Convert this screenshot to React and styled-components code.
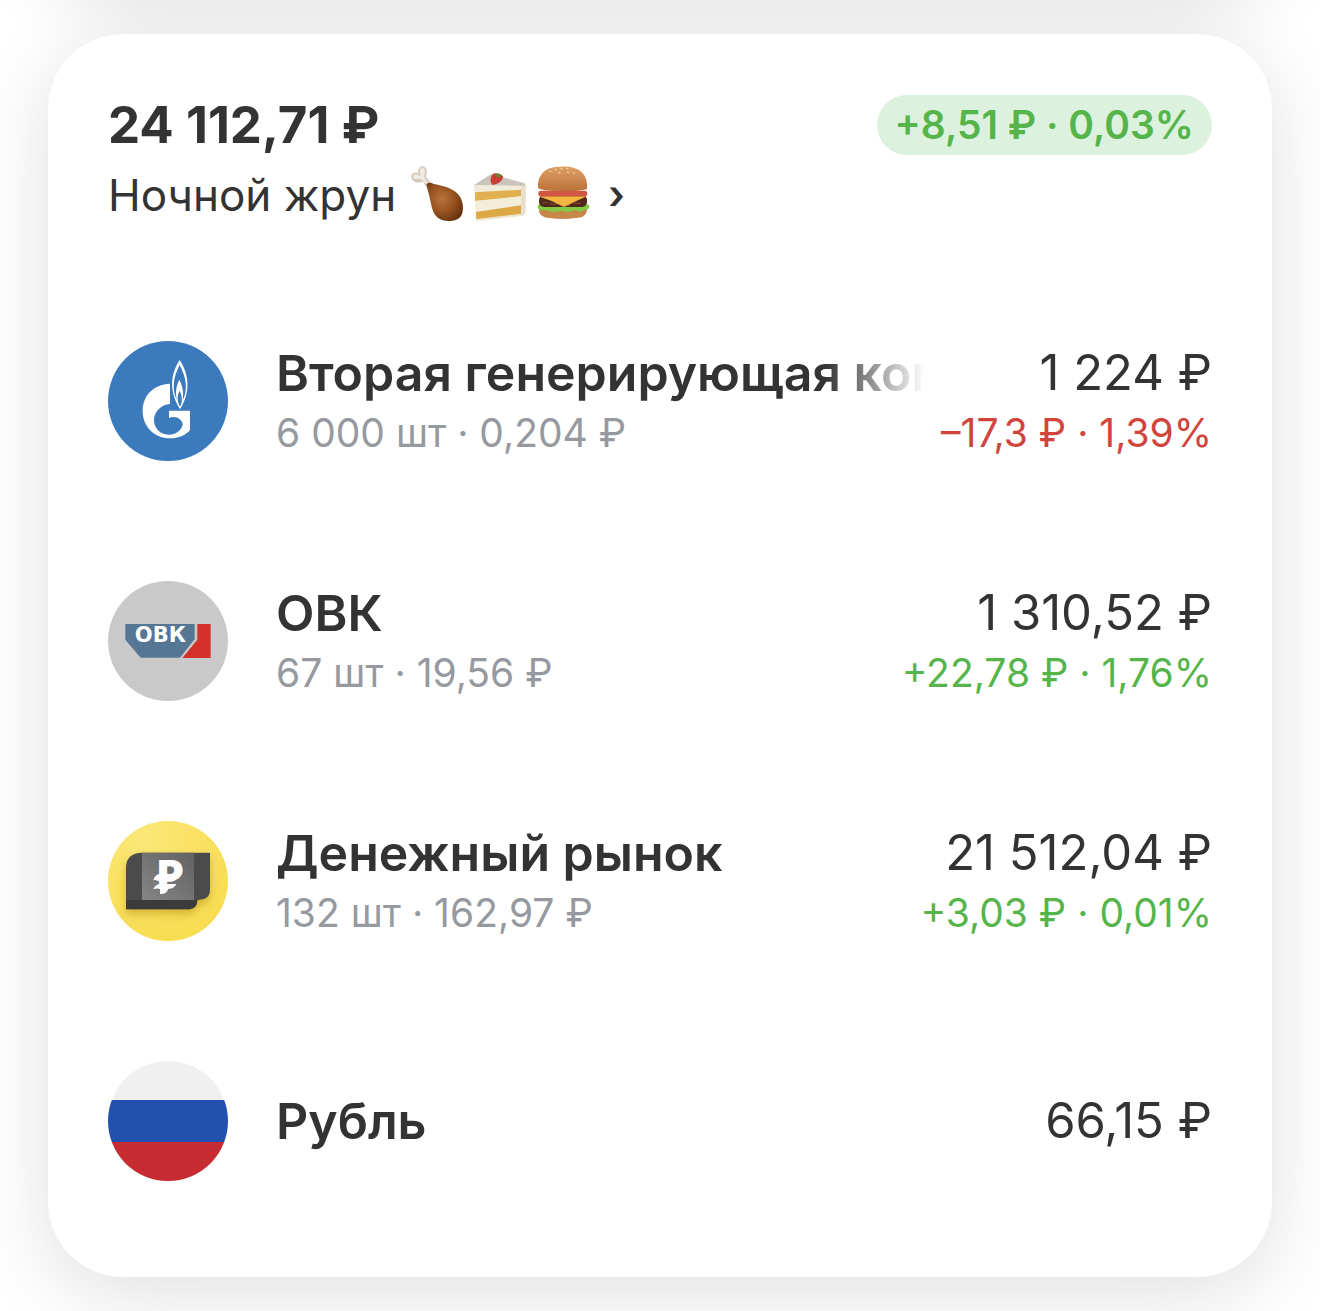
import React from "react";
import styled, { createGlobalStyle } from "styled-components";

const GlobalStyle = createGlobalStyle`
  *, *::before, *::after { box-sizing: border-box; }
  body {
    margin: 0;
    background: #fff;
    color: #333;
    font-family: Inter, "Noto Sans", "Liberation Sans", sans-serif;
    overflow-x: hidden;
  }
`;

const Page = styled.main`
  padding: 0 48px 34px;
  overflow: hidden;
`;

const Card = styled.section`
  background: #fff;
  border-radius: 75px;
  box-shadow: 0 16px 80px rgba(0, 0, 0, 0.13);
`;

const PreviousCard = styled(Card)`
  height: 480px;
  margin-top: -494px;
  margin-bottom: 48px;
`;

const PortfolioCard = styled(Card)`
  position: relative;
  padding: 61px 60px 96px;
`;

const Header = styled.header`
  display: flex;
  align-items: flex-start;
  justify-content: space-between;
  gap: 24px;
  margin-bottom: 106px;
`;

const Total = styled.h1`
  margin: 0;
  font-size: 51px;
  line-height: 60px;
  font-weight: 700;
`;

const PortfolioLink = styled.a`
  display: flex;
  align-items: center;
  color: inherit;
  font-size: 44px;
  line-height: 80px;
  text-decoration: none;
`;

const Treats = styled.span`
  display: flex;
  gap: 7px;
  margin: 0 16px 0 14px;
  padding-bottom: 4px;
`;

const Treat = styled.svg`
  display: block;
  width: 56px;
  height: 56px;
`;

const Chevron = styled.span`
  font-size: 40px;
  font-weight: 600;
`;

const Badge = styled.span`
  flex: none;
  padding: 0 18px;
  border-radius: 30px;
  background: #dcf2df;
  color: #55b54a;
  font-size: 39px;
  line-height: 60px;
  font-weight: 600;
`;

const Holdings = styled.ul`
  display: flex;
  flex-direction: column;
  gap: 120px;
  margin: 0;
  padding: 0;
  list-style: none;
`;

const Holding = styled.li`
  display: flex;
  align-items: center;
  height: 120px;
`;

const Logo = styled.svg`
  flex: none;
  display: block;
  width: 120px;
  height: 120px;
  margin-right: 48px;
`;

const Info = styled.div`
  flex: 1;
  min-width: 0;
  margin-right: 16px;
`;

const Name = styled.h2`
  margin: 0;
  overflow: hidden;
  white-space: nowrap;
  font-size: 50px;
  line-height: 64px;
  font-weight: 600;
  mask-image: linear-gradient(to right, #000 calc(100% - 100px), transparent);
`;

const Value = styled.div`
  flex: none;
  text-align: right;
  white-space: nowrap;
`;

const Amount = styled.p`
  margin: 0;
  font-size: 49px;
  line-height: 64px;
`;

const Detail = styled.p`
  margin: 0;
  font-size: 39px;
  line-height: 56px;
  color: ${({ $tone }) =>
    ({ up: "#55b54a", down: "#d0443c", muted: "#9699a0" })[$tone]};
`;

const Drumstick = () => (
  <Treat viewBox="30 30 168 168" role="img" aria-label="🍗">
    <defs>
      <radialGradient id="meat" cx="0.42" cy="0.42" r="0.65">
        <stop offset="0" stopColor="#b9733c" />
        <stop offset="0.55" stopColor="#96521f" />
        <stop offset="1" stopColor="#65310f" />
      </radialGradient>
    </defs>
    <path d="M78 95L68 79C62 86 46 85 38 76C31 66 33 55 43 53C48 51 53 54 56 55C52 45 57 35 66 34C76 33 83 43 80 53C77 61 78 67 83 73L95 84Z" fill="#d3cabd" />
    <path d="M40 68C38 60 46 56 54 60L62 64C59 52 57 43 66 38C76 39 76 50 73 59C71 68 76 75 84 82L80 88C71 80 65 71 58 71C51 70 45 75 40 68Z" fill="#f0ebe2" />
    <path d="M80 92C78 83 91 81 101 87C133 92 168 103 181 127C191 145 192 172 181 186C168 200 139 201 121 193C98 181 95 155 89 128C87 115 82 105 80 92Z" fill="url(#meat)" />
  </Treat>
);

const Cake = () => (
  <Treat viewBox="219 30 168 168" role="img" aria-label="🍰">
    <path d="M222 90C241 79 257 67 273 58L371 84C379 88 380 95 378 103L376 174C373 181 367 183 358 184L229 198Z" fill="#eee6cf" />
    <path d="M222 90C241 79 257 67 273 58L371 84C377 88 377 91 374 94Z" fill="#c9c5ba" />
    <path d="M222 91L367 92V107L225 112Z" fill="#f0ebdb" />
    <path d="M225 112L363 104V124L226 138Z" fill="#dfb04d" />
    <path d="M226 138L363 124V151L228 171Z" fill="#f3edda" />
    <path d="M228 171L363 151V176L229 192Z" fill="#dba843" />
    <path d="M363 94L377 89L376 174L363 183Z" fill="#e8e0cd" />
    <path d="M277 59C282 52 302 54 309 64C309 78 295 87 279 90C270 84 270 68 277 59Z" fill="#c83a32" />
    <path d="M283 61L294 54L299 61L307 60L298 68Z" fill="#668739" />
    <path d="M278 69l3 3M287 75l2 3M281 81l2 2M297 72l2 2" stroke="#f08a70" strokeWidth="2" />
  </Treat>
);

const Burger = () => (
  <Treat viewBox="408 30 168 168" role="img" aria-label="🍔">
    <defs>
      <linearGradient id="bun" x1="0" y1="0" x2="0" y2="1">
        <stop offset="0" stopColor="#dca066" />
        <stop offset="1" stopColor="#bd7139" />
      </linearGradient>
    </defs>
    <path d="M417 161H561C560 181 549 188 527 189C502 193 473 193 449 189C426 187 416 178 417 161Z" fill="#c7864a" />
    <path d="M414 150C421 143 554 143 567 150C571 160 560 166 553 164C543 174 532 167 522 166C506 174 492 170 479 168C463 174 450 169 439 166C425 170 408 162 414 150Z" fill="#83c943" />
    <rect x="417" y="120" width="144" height="36" rx="15" fill="#51291a" />
    <path d="M429 143h14m8 4h20m18 3h20m12-5h20" stroke="#79452b" strokeWidth="4" strokeLinecap="round" />
    <path d="M415 124H561L537 134L492 156L455 138Z" fill="#f4b640" />
    <rect x="415" y="107" width="147" height="17" rx="8" fill="#cf5744" />
    <path d="M414 99C411 65 432 39 466 36C493 32 531 33 548 55C561 69 562 88 561 102C541 111 431 112 414 99Z" fill="url(#bun)" />
    <path d="M449 50l3-1M466 43l3 1M483 42l3-2M500 40l3 1M477 53l3 1M503 51l2 2M521 54l2 1" stroke="#f2d199" strokeWidth="4" strokeLinecap="round" />
  </Treat>
);

const GazpromLogo = () => (
  <Logo viewBox="24 33 360 360" aria-hidden="true">
    <circle cx="204" cy="213" r="180" fill="#3b7bbd" />
    <path d="M210 161C160 163 128 197 128 243C128 290 163 325 210 325C235 325 257 316 270 300V242H207V264C225 255 248 267 248 284C244 302 226 314 206 314C181 314 162 295 162 271C162 245 183 224 210 222Z" fill="#fff" />
    <path d="M239 90C268 135 272 184 240 238C207 184 210 135 239 90Z" fill="#fff" />
    <path d="M239 105C260 145 264 180 248 211C252 186 247 166 238 149C229 166 225 187 231 211C215 180 219 142 239 105Z" fill="#3b7bbd" />
    <path d="M239 182C248 200 247 216 240 230C232 216 230 199 239 182Z" fill="#3b7bbd" />
  </Logo>
);

const OvkLogo = () => (
  <Logo viewBox="24 33 360 360" aria-hidden="true">
    <circle cx="204" cy="213" r="180" fill="#c9c9c9" />
    <path d="M76 162H284V207L240 263H122L76 209Z" fill="#557793" />
    <path d="M292 162H332V264H247L292 209Z" fill="#d4302b" />
    <text x="181" y="215" textAnchor="middle" fill="#fff" fontFamily="DejaVu Sans, sans-serif" fontSize="63" fontWeight="700">ОВК</text>
  </Logo>
);

const MoneyLogo = () => (
  <Logo viewBox="24 33 360 360" aria-hidden="true">
    <defs>
      <radialGradient id="gold" cx="0.3" cy="0.15" r="0.9">
        <stop offset="0" stopColor="#fae777" />
        <stop offset="1" stopColor="#f8dc50" />
      </radialGradient>
      <linearGradient id="steel" x1="1" y1="0" x2="0" y2="1">
        <stop offset="0" stopColor="#626262" />
        <stop offset="1" stopColor="#858585" />
      </linearGradient>
      <filter id="soft" x="-30%" y="-30%" width="160%" height="180%">
        <feDropShadow dx="0" dy="14" stdDeviation="12" floodColor="#a77a00" floodOpacity="0.45" />
      </filter>
    </defs>
    <circle cx="204" cy="213" r="180" fill="url(#gold)" />
    <g filter="url(#soft)">
      <path d="M78 174C78 143 96 128 126 128H330V240C330 260 318 270 292 270C292 288 282 298 262 298H78Z" fill="#4b4b4b" />
      <path d="M78 270H292C292 288 282 298 262 298H78Z" fill="#3b3b3b" />
    </g>
    <path d="M126 128H282V270H126Z" fill="url(#steel)" />
    <text x="172" y="237" fill="#fff" fontFamily="Inter, sans-serif" fontSize="120" fontWeight="900">Р</text>
    <path d="M160 211C164 198 171 191 184 191H202V203H232C227 212 221 215 208 215H184C173 213 166 208 160 211Z" fill="#fff" />
    <path d="M160 238C164 228 171 222 184 222H229C224 233 217 236 204 237C202 248 194 252 180 252V237C172 234 166 236 160 238Z" fill="#fff" />
  </Logo>
);

const RussiaFlag = () => (
  <Logo viewBox="0 0 120 120" aria-hidden="true">
    <defs>
      <clipPath id="coin"><circle cx="60" cy="60" r="60" /></clipPath>
    </defs>
    <g clipPath="url(#coin)">
      <path d="M0 0H120V39H0Z" fill="#f0f0f0" />
      <path d="M0 39H120V81H0Z" fill="#2250ae" />
      <path d="M0 81H120V120H0Z" fill="#c52b30" />
    </g>
  </Logo>
);

const holdings = [
  { name: "Вторая генерирующая ком", detail: "6 000 шт · 0,204 ₽", amount: "1 224 ₽", change: "–17,3 ₽ · 1,39%", tone: "down", Icon: GazpromLogo },
  { name: "ОВК", detail: "67 шт · 19,56 ₽", amount: "1 310,52 ₽", change: "+22,78 ₽ · 1,76%", tone: "up", Icon: OvkLogo },
  { name: "Денежный рынок", detail: "132 шт · 162,97 ₽", amount: "21 512,04 ₽", change: "+3,03 ₽ · 0,01%", tone: "up", Icon: MoneyLogo },
  { name: "Рубль", amount: "66,15 ₽", Icon: RussiaFlag },
];

export default function App() {
  return (
    <>
      <GlobalStyle />
      <Page>
        <PreviousCard aria-hidden="true" />
        <PortfolioCard>
          <Header>
            <div>
              <Total>24 112,71 ₽</Total>
              <PortfolioLink href="#portfolio">
                Ночной жрун
                <Treats>
                  <Drumstick />
                  <Cake />
                  <Burger />
                </Treats>
                <Chevron>›</Chevron>
              </PortfolioLink>
            </div>
            <Badge>+8,51 ₽ · 0,03%</Badge>
          </Header>
          <Holdings>
            {holdings.map(({ name, detail, amount, change, tone, Icon }) => (
              <Holding key={name}>
                <Icon />
                <Info>
                  <Name>{name}</Name>
                  {detail && <Detail $tone="muted">{detail}</Detail>}
                </Info>
                <Value>
                  <Amount>{amount}</Amount>
                  {change && <Detail $tone={tone}>{change}</Detail>}
                </Value>
              </Holding>
            ))}
          </Holdings>
        </PortfolioCard>
      </Page>
    </>
  );
}
